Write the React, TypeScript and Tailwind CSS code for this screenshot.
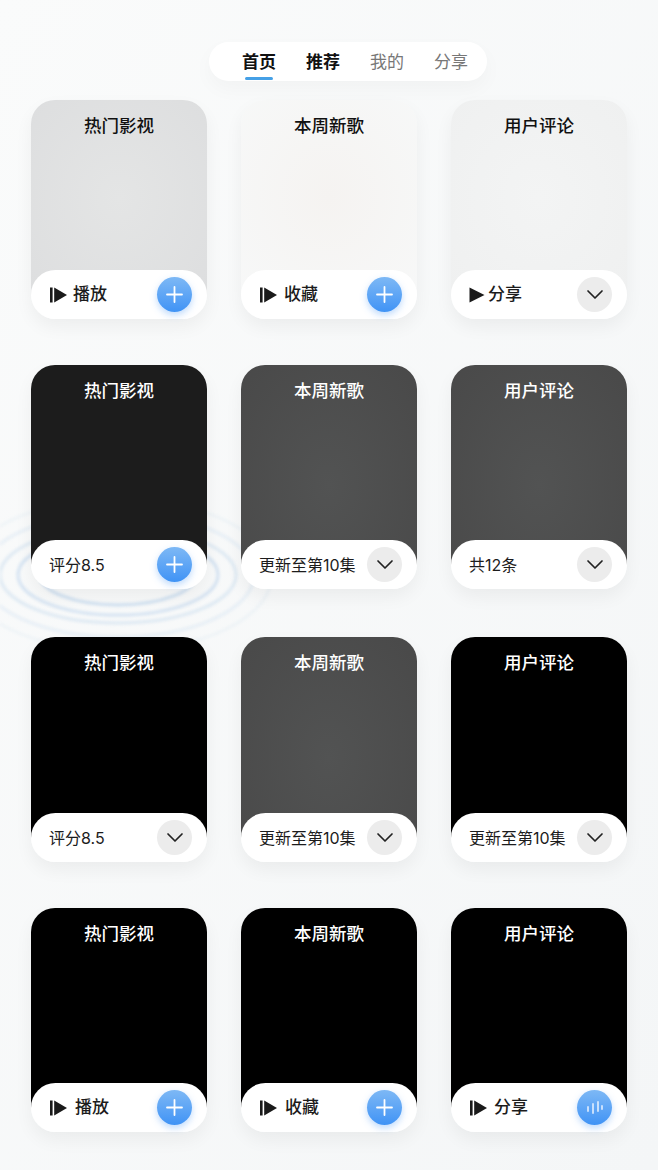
const stack = "font-['Inter','Noto_Sans_CJK_SC',sans-serif]";

type Action = "plus" | "check" | "wave";

type CardData = {
  title: string;
  label: string;
  play?: "bar" | "plain";
  gap?: string;
  action: Action;
  face: string;
  titleColor: string;
};

const first = "bg-[radial-gradient(ellipse_at_50%_50%,#e4e5e5,#dddedf)]";
const white = "bg-[radial-gradient(ellipse_at_50%_50%,#f5f3f1,#f7f8f8)]";
const pale = "bg-[radial-gradient(ellipse_at_50%_50%,#f3f4f4,#eff0f0)]";
const soot = "bg-[#1c1c1c]";
const grey = "bg-[radial-gradient(ellipse_at_50%_60%,#525353,#494949)]";
const black = "bg-black";
const dark = "text-[#111]";
const lite = "text-white";

const rows: { height: string; margin: string; cards: CardData[] }[] = [
  {
    height: "h-[219px]",
    margin: "",
    cards: [
      { title: "热门影视", label: "播放", play: "bar", gap: "gap-[6px]", action: "plus", face: first, titleColor: dark },
      { title: "本周新歌", label: "收藏", play: "bar", gap: "gap-[7px]", action: "plus", face: white, titleColor: dark },
      { title: "用户评论", label: "分享", play: "plain", gap: "gap-[3px]", action: "check", face: pale, titleColor: dark },
    ],
  },
  {
    height: "h-[224px]",
    margin: "mt-[46px]",
    cards: [
      { title: "热门影视", label: "评分8.5", action: "plus", face: soot, titleColor: lite },
      { title: "本周新歌", label: "更新至第10集", action: "check", face: grey, titleColor: lite },
      { title: "用户评论", label: "共12条", action: "check", face: grey, titleColor: lite },
    ],
  },
  {
    height: "h-[225px]",
    margin: "mt-[48px]",
    cards: [
      { title: "热门影视", label: "评分8.5", action: "check", face: black, titleColor: lite },
      { title: "本周新歌", label: "更新至第10集", action: "check", face: grey, titleColor: lite },
      { title: "用户评论", label: "更新至第10集", action: "check", face: black, titleColor: lite },
    ],
  },
  {
    height: "h-[224px]",
    margin: "mt-[46px]",
    cards: [
      { title: "热门影视", label: "播放", play: "bar", gap: "gap-[8px]", action: "plus", face: black, titleColor: lite },
      { title: "本周新歌", label: "收藏", play: "bar", gap: "gap-[8px]", action: "plus", face: black, titleColor: lite },
      { title: "用户评论", label: "分享", play: "bar", gap: "gap-[7px]", action: "wave", face: black, titleColor: lite },
    ],
  },
];

function PlayIcon({ kind }: { kind: "bar" | "plain" }) {
  if (kind === "plain") {
    return (
      <svg width="16" height="16" viewBox="0 0 16 16" className="shrink-0">
        <path d="M0.5 0.5 L15.5 8 L0.5 15.5 Z" fill="#1a1a1a" />
      </svg>
    );
  }
  return (
    <svg width="17" height="16" viewBox="0 0 17 16" className="shrink-0">
      <rect x="0" y="0.5" width="2.6" height="15" fill="#1a1a1a" />
      <path d="M4.2 0.5 L17 8 L4.2 15.5 Z" fill="#1a1a1a" />
    </svg>
  );
}

function ActionButton({ action }: { action: Action }) {
  if (action === "check") {
    return (
      <div className="flex h-[35px] w-[35px] items-center justify-center rounded-full bg-[#ececec]">
        <svg width="18" height="11" viewBox="0 0 18 11" fill="none" stroke="#222" strokeWidth="1.7" strokeLinecap="round" strokeLinejoin="round">
          <path d="M2 2 L9 9 L16 2" />
        </svg>
      </div>
    );
  }
  return (
    <div className="flex h-[35px] w-[35px] items-center justify-center rounded-full bg-gradient-to-b from-[#7db8f5] to-[#3f93f5] shadow-[0_3px_7px_rgba(70,150,245,0.35)]">
      {action === "plus" ? (
        <svg width="17" height="17" viewBox="0 0 17 17" stroke="#fff" strokeWidth="1.8" strokeLinecap="round">
          <path d="M8.5 1 V16 M1 8.5 H16" />
        </svg>
      ) : (
        <svg width="18" height="14" viewBox="0 0 18 14" stroke="#dbeafe" strokeWidth="2" strokeLinecap="round" opacity="0.85">
          <path d="M2 6 V10 M7 3 V12 M12 1 V10 M16 5 V8" />
        </svg>
      )}
    </div>
  );
}

function Card({ card, height }: { card: CardData; height: string }) {
  return (
    <div className={`${height} flex w-[176px] flex-col rounded-[24px] shadow-[0_8px_18px_rgba(0,0,0,0.05)]`}>
      <div className={`-mb-[25px] flex-1 rounded-t-[24px] pt-[14px] text-center text-[17.5px] leading-[24px] font-medium ${card.face} ${card.titleColor}`}>{card.title}</div>
      <div className={`relative flex h-[49px] shrink-0 items-center justify-between rounded-[25px] bg-white pr-[15px] ${card.play === "bar" ? "pl-[19px]" : "pl-[18px]"}`}>
        <div className={`flex items-center ${card.gap ?? ""}`}>
          {card.play && <PlayIcon kind={card.play} />}
          <span className={`whitespace-nowrap text-[#1c1c1c] ${card.play ? "text-[17px] font-medium" : "text-[16px]"}`}>{card.label}</span>
        </div>
        <ActionButton action={card.action} />
      </div>
    </div>
  );
}

function Ripple() {
  const rings = [
    [78, 30, 0.7],
    [100, 40, 0.6],
    [118, 48, 0.45],
    [136, 62, 0.28],
    [154, 76, 0.15],
  ];
  return (
    <svg className="absolute top-[490px] left-0 blur-[1.5px]" width="290" height="190" viewBox="0 0 290 190" fill="none">
      {rings.map(([rx, ry, o]) => (
        <ellipse key={rx} cx="118" cy="85" rx={rx} ry={ry} stroke="#bcd4ec" strokeWidth="3" opacity={o} />
      ))}
    </svg>
  );
}

export default function App() {
  const tabs = [
    { name: "首页", cls: "font-semibold text-[#111]" },
    { name: "推荐", cls: "font-semibold text-[#111]" },
    { name: "我的", cls: "text-[#777]" },
    { name: "分享", cls: "text-[#777]" },
  ];

  return (
    <div className={`relative h-[1170px] w-[658px] overflow-hidden bg-gradient-to-br from-[#fafbfb] to-[#f4f6f7] ${stack}`}>
      <Ripple />
      <div className="relative flex flex-col items-center pt-[42px]">
        <nav className="ml-[38px] flex h-[39px] w-[278px] items-center gap-[30px] rounded-full bg-white pt-[2px] pl-[33px] shadow-[0_8px_20px_rgba(0,0,0,0.03)]">
          {tabs.map((tab, i) => (
            <div key={tab.name} className="relative">
              <span className={`text-[17px] ${tab.cls}`}>{tab.name}</span>
              {i === 0 && <div className="absolute right-[3px] -bottom-[5px] left-[3px] h-[3px] rounded-full bg-[#45a0e6]" />}
            </div>
          ))}
        </nav>
        <div className="mt-[19px] flex flex-col">
          {rows.map((row, i) => (
            <div key={i} className={`flex gap-[34px] ${row.margin}`}>
              {row.cards.map((card, j) => (
                <Card key={j} card={card} height={row.height} />
              ))}
            </div>
          ))}
        </div>
      </div>
    </div>
  );
}
